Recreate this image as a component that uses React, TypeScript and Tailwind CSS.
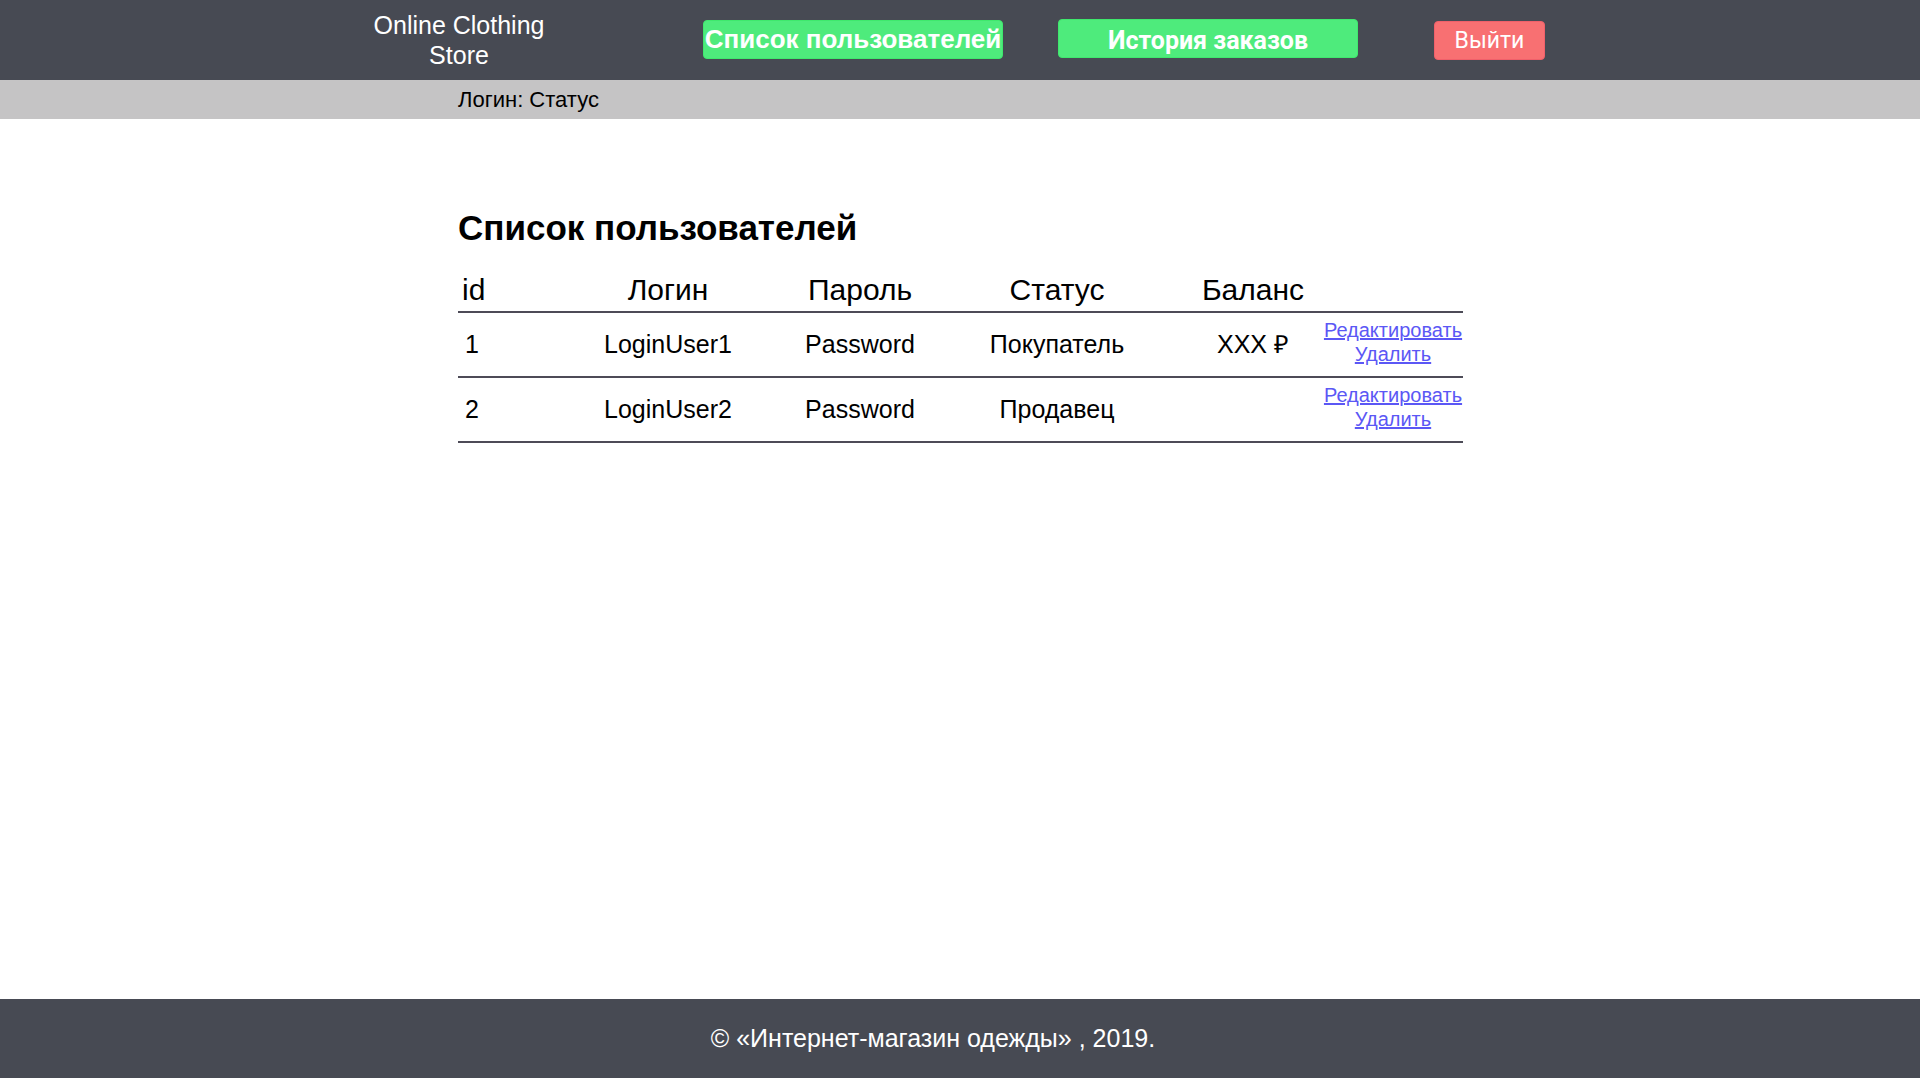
const users = [
  { id: 1, login: "LoginUser1", password: "Password", status: "Покупатель", balance: "XXX ₽" },
  { id: 2, login: "LoginUser2", password: "Password", status: "Продавец", balance: "" },
];

const cols = "grid grid-cols-[89px_242px_142px_252px_140px_140px]";

export default function App() {
  return (
    <div className="min-h-screen flex flex-col bg-white text-black font-['Liberation_Sans',Arial,sans-serif]">
      {/* Header */}
      <header className="h-[80px] bg-[#474a53] flex items-center">
        <div className="ml-[359px] w-[200px] text-center text-white text-[25px] leading-[30px]">
          Online Clothing
          <br />
          Store
        </div>
        <button className="ml-[144px] mb-[2px] w-[300px] h-[39px] rounded-[4px] bg-[#4eeb7c] border border-[#3fe86d] text-white font-bold text-[26px] leading-none whitespace-nowrap flex items-center justify-center">
          Список пользователей
        </button>
        <button className="ml-[55px] mb-[4px] w-[300px] h-[39px] rounded-[4px] bg-[#4eeb7c] border border-[#3fe86d] text-white font-bold text-[25px] leading-none font-['Roboto',sans-serif] flex items-center justify-center pt-[4px]">
          История заказов
        </button>
        <button className="ml-[76px] w-[111px] h-[39px] rounded-[4px] bg-[#f87072] border border-[#f0606a] text-white text-[23px] leading-none font-['Roboto',sans-serif] flex items-center justify-center">
          Выйти
        </button>
      </header>

      {/* Status bar */}
      <div className="h-[39px] bg-[#c5c4c5] flex items-center pl-[458px] text-[22px]">
        Логин: Статус
      </div>

      {/* Content */}
      <main className="flex-1 pl-[458px] pt-[88px]">
        <h1 className="text-[35px] font-bold leading-[42px]">Список пользователей</h1>

        <div className="w-[1005px] mt-[20px]">
          <div className={`${cols} items-center h-[44px] border-b-2 border-[#4d4b57] text-[30px] leading-[34px]`}>
            <div className="pl-[4px]">id</div>
            <div className="text-center">Логин</div>
            <div className="text-center">Пароль</div>
            <div className="text-center">Статус</div>
            <div className="text-center">Баланс</div>
            <div />
          </div>

          {users.map((u) => (
            <div
              key={u.id}
              className={`${cols} items-center h-[65px] border-b-2 border-[#4d4b57] text-[25px]`}
            >
              <div className="pl-[7px]">{u.id}</div>
              <div className="text-center">{u.login}</div>
              <div className="text-center">{u.password}</div>
              <div className="text-center">{u.status}</div>
              <div className="text-center">{u.balance}</div>
              <div className="flex flex-col items-center text-[20px] leading-[24px] text-[#5b57f5] -mt-[5px]">
                <a href="#" className="underline">Редактировать</a>
                <a href="#" className="underline">Удалить</a>
              </div>
            </div>
          ))}
        </div>
      </main>

      {/* Footer */}
      <footer className="h-[79px] bg-[#474a53] flex items-center justify-center pr-[54px] text-white text-[25px]">
        © «Интернет-магазин одежды» , 2019.
      </footer>
    </div>
  );
}
